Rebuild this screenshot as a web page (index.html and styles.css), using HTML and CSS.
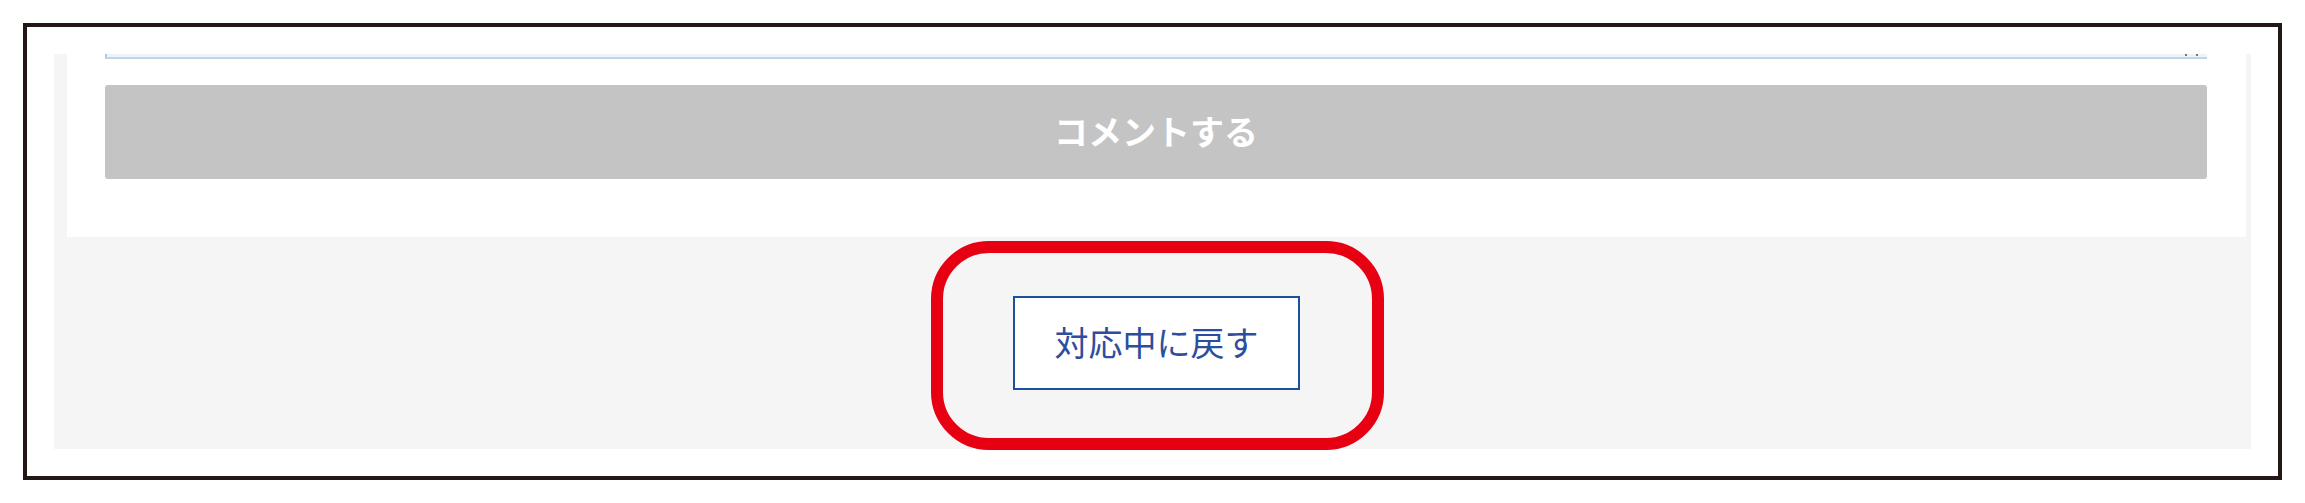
FILE: index.html
```html
<!DOCTYPE html>
<html lang="ja">

<head>
    <meta charset="UTF-8">
    <title>コメント</title>
    <link rel="stylesheet" href="styles.css">
</head>

<body>
    <!-- Screenshot frame -->
    <div class="frame">
        <div class="panel">
            <!-- Comment form card -->
            <div class="card">
                <div class="textarea-edge">
                    <span class="grip"></span>
                </div>
                <button type="button" class="comment-button" disabled>コメントする</button>
            </div>

            <!-- Status actions -->
            <div class="actions">
                <div class="highlight-wrap">
                    <button type="button" class="back-button">対応中に戻す</button>
                    <span class="highlight"></span>
                </div>
            </div>
        </div>
    </div>
</body>

</html>
```

FILE: styles.css
```css
/* Basic styling */
body {
    margin: 0;
    padding: 0;
    background-color: #ffffff;
    font-family: "Noto Sans CJK JP", "Noto Sans", sans-serif;
}

.frame {
    margin: 23px 0 0 23px;
    border: 4px solid #231815;
    padding: 27px;
    box-sizing: border-box;
    width: 2259px;
    height: 457px;
}

.panel {
    background: #f5f5f5;
    height: 395px;
}

.card {
    margin: 0 5px 0 13px;
    padding: 0 39px 58px 38px;
    background: #ffffff;
}

/* bottom of the textarea, cut off at the top */
.textarea-edge {
    position: relative;
    height: 3px;
    background: #eef3fa;
    border-bottom: 2px solid #c3d4ea;
    border-left: 2px solid #b7c6dc;
    margin-bottom: 26px;
}

.grip {
    position: absolute;
    right: 9px;
    top: 0;
    width: 13px;
    height: 2px;
    background: linear-gradient(to right, #777 0 2px, transparent 2px 11px, #777 11px 13px);
}

.comment-button {
    display: block;
    width: 100%;
    height: 94px;
    padding: 0 0 4px;
    border: none;
    border-radius: 3px;
    background: #c4c4c4;
    color: #ffffff;
    font-family: "Noto Sans CJK JP", sans-serif;
    font-size: 34px;
    font-weight: bold;
}

.actions {
    display: flex;
    justify-content: center;
    margin: 0 5px 0 13px;
    padding: 59px 0;
}

.highlight-wrap {
    position: relative;
}

.back-button {
    display: block;
    width: 287px;
    height: 94px;
    padding: 0 0 3px;
    border: 2px solid #1d4fa0;
    background: #ffffff;
    color: #2c4e9c;
    font-family: "Noto Sans CJK JP", sans-serif;
    font-size: 34px;
}

/* red annotation around the button */
.highlight {
    position: absolute;
    top: -55px;
    left: -82px;
    right: -84px;
    bottom: -60px;
    border: 12px solid #e60012;
    border-radius: 58px;
}
```
